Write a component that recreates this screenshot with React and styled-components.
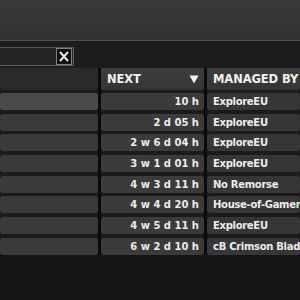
import React from "react";
import styled, { createGlobalStyle } from "styled-components";

const Global = createGlobalStyle`
  html, body { margin: 0; padding: 0; background: #151515; }
  body { font-family: "DejaVu Sans", "Liberation Sans", sans-serif; width: 300px; height: 300px; overflow: hidden; }
`;

const Page = styled.div`
  width: 300px;
  height: 300px;
  display: flex;
  flex-direction: column;
  background: #151515;
`;

const TopBar = styled.div`
  height: 40px;
  flex: none;
  background: linear-gradient(#393939, #323232);
  border-bottom: 1px solid #505050;
`;

const FilterBar = styled.div`
  height: 27px;
  flex: none;
  background: #1c1c1c;
  display: flex;
  align-items: flex-start;
  padding-top: 6px;
  box-sizing: border-box;
`;

const Search = styled.div`
  width: 76px;
  height: 19px;
  box-sizing: border-box;
  margin-left: -2px;
  border: 1px solid #5c5c5c;
  background: #252525;
  display: flex;
  justify-content: flex-end;
  align-items: center;
  padding-right: 1px;
`;

const ClearButton = styled.div`
  width: 16px;
  height: 17px;
  box-sizing: border-box;
  border: 1px solid #808080;
  background: #101010;
  display: flex;
  align-items: center;
  justify-content: center;
`;

const Table = styled.div`
  display: flex;
  flex-direction: column;
  gap: 3.7px;
  background: linear-gradient(
    to right,
    #1b1b1b 98px,
    #0b0b0b 98px 101px,
    #1b1b1b 101px 204px,
    #0b0b0b 204px 207px,
    #1b1b1b 207px
  );
`;

const Row = styled.div`
  display: grid;
  grid-template-columns: 98px 103px 1fr;
  column-gap: 3px;
  height: ${(p) => (p.$header ? "22px" : "17px")};
  margin-bottom: ${(p) => (p.$header ? "-0.7px" : "0")};
  background: #0b0b0b;
`;

const HeadCell = styled.div`
  background: ${(p) => (p.$dark ? "#2a2a2a" : "linear-gradient(#3d3d3d, #353535)")};
  color: #f2f2f2;
  font-weight: bold;
  font-size: 11.5px;
  letter-spacing: -0.1px;
  display: flex;
  align-items: center;
  justify-content: space-between;
  padding: 0 5px 0 6px;
  border-radius: 0 0 2px 2px;
  white-space: nowrap;
  overflow: hidden;
`;

const Cell = styled.div`
  background: ${(p) => (p.$active ? "#4a4a4a" : p.$tone)};
  color: #ececec;
  font-weight: bold;
  font-size: 10px;
  letter-spacing: ${(p) => (p.$right ? "0" : "-0.3px")};
  display: flex;
  align-items: center;
  justify-content: ${(p) => (p.$right ? "flex-end" : "flex-start")};
  padding: 0 5px 0 6px;
  border-radius: 2px;
  white-space: nowrap;
  overflow: hidden;
`;

const rows = [
  ["10 h", "ExploreEU"],
  ["2 d 05 h", "ExploreEU"],
  ["2 w 6 d 04 h", "ExploreEU"],
  ["3 w 1 d 01 h", "ExploreEU"],
  ["4 w 3 d 11 h", "No Remorse"],
  ["4 w 4 d 20 h", "House-of-Gamers"],
  ["4 w 5 d 11 h", "ExploreEU"],
  ["6 w 2 d 10 h", "cB Crimson Blade"],
];

export default function App() {
  return (
    <Page>
      <Global />
      <TopBar />
      <FilterBar>
        <Search>
          <ClearButton>
            <svg width="12" height="13" viewBox="0 0 12 13">
              <path d="M2 2 L10 11 M10 2 L2 11" stroke="#e8e8e8" strokeWidth="2" />
            </svg>
          </ClearButton>
        </Search>
      </FilterBar>
      <Table>
        <Row $header>
          <HeadCell $dark />
          <HeadCell>
            <span>NEXT</span>
            <svg width="10" height="9" viewBox="0 0 10 9">
              <path d="M0.5 0.5 H9.5 L5 8.5 Z" fill="#f2f2f2" />
            </svg>
          </HeadCell>
          <HeadCell>
            <span>MANAGED BY</span>
          </HeadCell>
        </Row>
        {rows.map(([next, by], i) => (
          <Row key={i}>
            <Cell $active={i === 0} $tone="#3a3a3a" />
            <Cell $right $tone="#3b3b3b">{next}</Cell>
            <Cell $tone="#363636">{by}</Cell>
          </Row>
        ))}
      </Table>
    </Page>
  );
}
